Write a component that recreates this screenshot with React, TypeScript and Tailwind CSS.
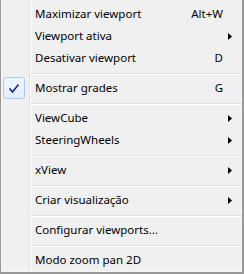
type Item =
    | { kind: 'item'; label: string; shortcut?: string; submenu?: boolean; checked?: boolean }
    | { kind: 'sep' };

const items: Item[] = [
    { kind: 'item', label: 'Maximizar viewport', shortcut: 'Alt+W' },
    { kind: 'item', label: 'Viewport ativa', submenu: true },
    { kind: 'item', label: 'Desativar viewport', shortcut: 'D' },
    { kind: 'sep' },
    { kind: 'item', label: 'Mostrar grades', shortcut: 'G', checked: true },
    { kind: 'sep' },
    { kind: 'item', label: 'ViewCube', submenu: true },
    { kind: 'item', label: 'SteeringWheels', submenu: true },
    { kind: 'sep' },
    { kind: 'item', label: 'xView', submenu: true },
    { kind: 'sep' },
    { kind: 'item', label: 'Criar visualização', submenu: true },
    { kind: 'sep' },
    { kind: 'item', label: 'Configurar viewports...' },
    { kind: 'sep' },
    { kind: 'item', label: 'Modo zoom pan 2D' },
];

function Gutter({ children }: { children?: React.ReactNode }) {
    return (
        <>
            <div className="w-[27px] shrink-0 flex items-center">{children}</div>
            <div className="w-px shrink-0 bg-[#e2e3e3]" />
            <div className="w-px shrink-0 bg-white" />
        </>
    );
}

function CheckBox() {
    return (
        <div className="ml-px w-[22px] h-[22px] rounded-[3px] border border-[#a9caf1] bg-gradient-to-b from-[#f0f6fe] to-[#e3edfb] flex items-center justify-center">
            <svg width="12" height="11" viewBox="0 0 12 11">
                <path d="M1.5 5.5 L4.5 9 L10.5 1.5" fill="none" stroke="#14208c" strokeWidth="1.6" />
            </svg>
        </div>
    );
}

function Arrow() {
    return (
        <svg width="4" height="7" viewBox="0 0 4 7">
            <polygon points="0,0 4,3.5 0,7" fill="#000" />
        </svg>
    );
}

export default function App() {
    function renderItem(item: Item, i: number) {
        if (item.kind === 'sep') {
            return (
                <div key={i} className="flex h-[8px]">
                    <Gutter />
                    <div className="flex-1 pt-[4px]">
                        <div className="h-px bg-[#e0e0e0]" />
                        <div className="h-px bg-white" />
                    </div>
                </div>
            );
        }
        return (
            <div key={i} className="flex h-[22px]">
                <Gutter>{item.checked && <CheckBox />}</Gutter>
                <div className="flex-1 flex items-center pl-[4px]">
                    <span className="flex-1 whitespace-nowrap">{item.label}</span>
                    {item.shortcut && <span className="whitespace-nowrap">{item.shortcut}</span>}
                    <div className="w-[18px] flex items-center pl-[5px]">{item.submenu && <Arrow />}</div>
                </div>
            </div>
        );
    }

    return (
        <div className="w-[244px] h-[274px] bg-[#f0f0f0] border-l border-r-2 border-b-2 border-[#979797] text-black text-[11.5px] leading-none font-['Noto_Sans','Open_Sans',sans-serif]">
            <div className="h-full border-l border-r border-b border-[#f7f7f7]">
                <div className="flex h-[3px]">
                    <Gutter />
                </div>
                {items.map(renderItem)}
            </div>
        </div>
    );
}
